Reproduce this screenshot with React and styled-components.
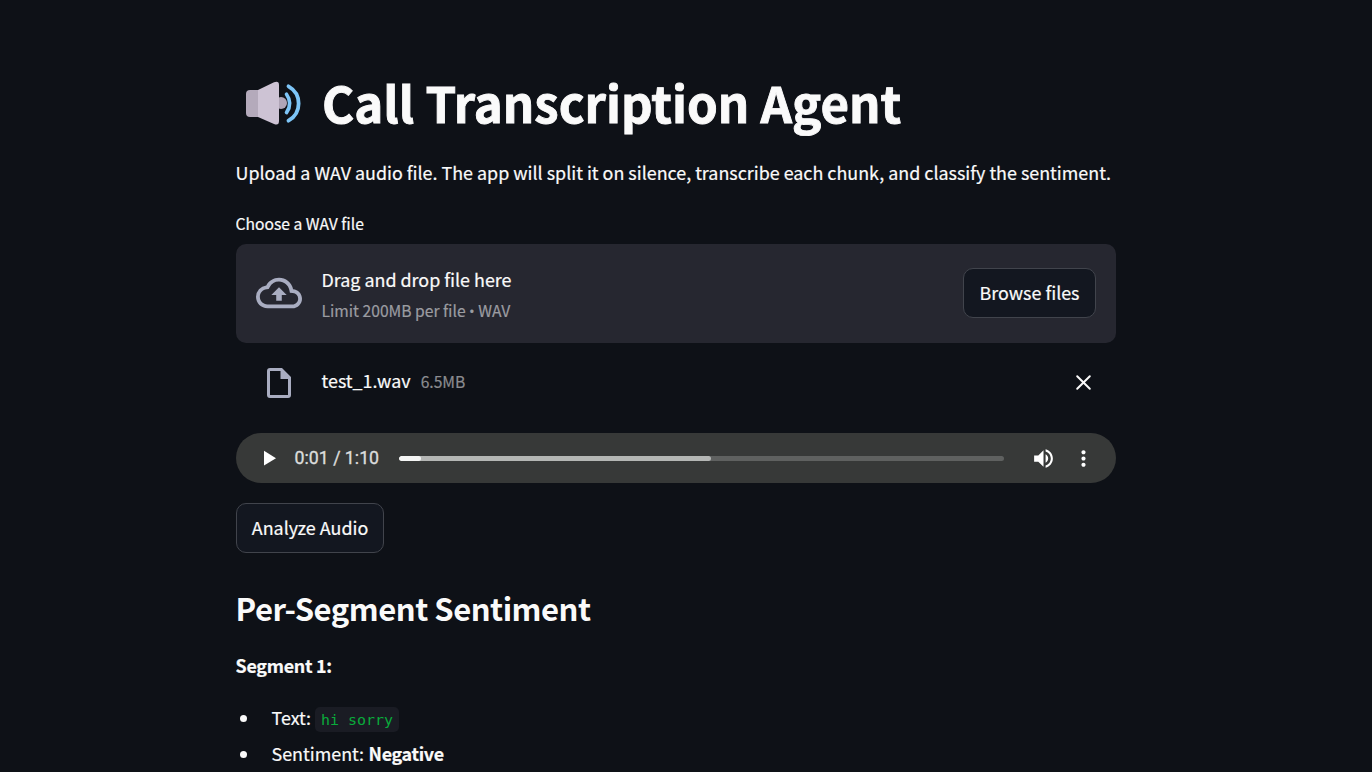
import React from "react";
import styled, { createGlobalStyle } from "styled-components";

const GlobalStyle = createGlobalStyle`
  * { box-sizing: border-box; }
  html, body { margin: 0; height: 772px; overflow: hidden; background: #0e1117; }
  body {
    color: #fafafa;
    font-family: "Noto Sans CJK SC", "Open Sans", sans-serif;
    font-size: 17.9px;
    line-height: 32px;
    -webkit-text-stroke: 0.2px;
  }
  h1, h2, p, ul { margin: 0; }
  button { font: inherit; color: inherit; cursor: pointer; }
`;

const Page = styled.main`
  width: 880px;
  height: 772px;
  margin-left: 236px;
  padding-top: 70px;
  overflow: hidden;
  white-space: nowrap;
`;

const Title = styled.h1`
  display: flex;
  align-items: center;
  height: 66px;
  font-size: 49.2px;
  font-weight: 700;
  line-height: 62px;
  -webkit-text-stroke: 0.9px;
  svg { flex: none; margin: 0 17px 0 6px; }
  span { padding-bottom: 3px; }
`;

const Intro = styled.p`
  margin: 20px 0 0 -0.5px;
`;

const Label = styled.p`
  margin: 24px 0 0 -0.5px;
  height: 32px;
  font-size: 15.66px;
  line-height: 24px;
`;

const Dropzone = styled.section`
  display: flex;
  align-items: center;
  height: 99px;
  padding: 0 20px 1px;
  border-radius: 10px;
  background: #262730;
`;

const IconSlot = styled.span`
  display: flex;
  align-items: center;
  justify-content: center;
  flex: none;
  width: 46px;
  margin-right: 19.5px;
  color: #a9adc1;
`;

const DropText = styled.div`
  flex: 1;
  display: flex;
  flex-direction: column;
  padding-top: 3px;
`;

const Hint = styled.span`
  font-size: 15.66px;
  line-height: 31px;
  color: #9b9ca1;
`;

const Dot = styled.span`
  font-family: "Open Sans", sans-serif;
  font-size: 15px;
`;

const Button = styled.button`
  width: ${(p) => p.$width}px;
  height: 50px;
  padding: 0 0 2px;
  border: 1px solid #41444c;
  border-radius: 10px;
  background: #131720;
`;

const FileRow = styled.div`
  display: flex;
  align-items: center;
  height: 50px;
  margin-top: 14px;
  padding: 0 20px;
  svg { position: relative; top: 0.5px; }
`;

const FileName = styled.span`
  margin-right: 10px;
  padding-bottom: 4px;
`;

const FileSize = styled.span`
  flex: 1;
  font-size: 15.66px;
  color: #8b8c90;
`;

const RemoveButton = styled.button`
  display: flex;
  width: 25px;
  height: 25px;
  padding: 0;
  border: 0;
  background: none;
`;

const Player = styled.div`
  display: flex;
  align-items: center;
  height: 50px;
  margin: 26px 0 20px;
  padding-left: 20px;
  border-radius: 25px;
  background: #373938;
`;

const Time = styled.span`
  width: 104.5px;
  margin-left: 12.5px;
  font-family: Roboto, sans-serif;
  font-size: 17.75px;
  color: #dcdddc;
  -webkit-text-stroke: 0.35px;
`;

const Track = styled.div`
  width: 605px;
  height: 5px;
  margin-right: 27px;
  border-radius: 3px;
  overflow: hidden;
  background: #5f6160;
`;

const Buffered = styled.div`
  width: 312px;
  height: 100%;
  border-radius: 3px;
  background: #b4b6b4;
`;

const Played = styled.div`
  width: 22px;
  height: 100%;
  border-radius: 3px;
  background: #f4f5f4;
`;

const MoreIcon = styled.svg`
  margin-left: 15px;
`;

const Heading = styled.h2`
  margin: 34px 0 0 -0.5px;
  height: 42px;
  font-size: 31px;
  font-weight: 600;
  line-height: 42px;
  letter-spacing: -0.47px;
  -webkit-text-stroke: 0;
`;

const SegmentName = styled.p`
  margin: 20px 0 0 -0.5px;
  font-weight: 600;
  letter-spacing: -0.28px;
`;

const Details = styled.ul`
  margin-top: 20px;
  padding: 0;
  list-style: none;
`;

const Detail = styled.li`
  display: flex;
  align-items: center;
  height: 32px;
  margin-bottom: 4px;
  &::before {
    content: "";
    width: 7px;
    height: 7px;
    margin: 2px 24.5px 0 4px;
    border-radius: 50%;
    background: #fafafa;
  }
`;

const Code = styled.code`
  height: 25px;
  margin: 4px 0 0 4px;
  padding: 0 6px;
  border-radius: 5px;
  background: #1a1c24;
  color: #09ab3b;
  font-family: "DejaVu Sans Mono", monospace;
  font-size: 14.95px;
  line-height: 27px;
  -webkit-text-stroke: 0;
`;

const Strong = styled.strong`
  margin-left: 4.5px;
  font-weight: 600;
  letter-spacing: -0.3px;
`;

const SpeakerIcon = () => (
  <svg width="63" height="54" viewBox="0 0 63 54">
    <circle cx="39" cy="27" r="6" fill="#b0a5b7" />
    <path d="M8 14H17V41H8Q4 41 4 37V18Q4 14 8 14Z" fill="#b4aabb" />
    <path d="M16 14 32 6.3Q37 4.5 37 9V45Q37 50 32 48L16 41Z" fill="#cdc3d4" />
    <path d="M44.5 18.2Q51 27.4 44.5 36.6" fill="none" stroke="#7dc5f7" strokeWidth="3.6" strokeLinecap="round" />
    <path d="M46.5 10.3C60 18 60 37 46.5 44.7" fill="none" stroke="#7dc5f7" strokeWidth="3.8" strokeLinecap="round" />
  </svg>
);

export default function App() {
  return (
    <>
      <GlobalStyle />
      <Page>
        <Title><SpeakerIcon /><span>Call Transcription Agent</span></Title>
        <Intro>Upload a WAV audio file. The app will split it on silence, transcribe each chunk, and classify the sentiment.</Intro>
        <Label>Choose a WAV file</Label>
        <Dropzone>
          <IconSlot>
            <svg width="46" height="46" viewBox="0 0 24 24" fill="currentColor">
              <path d="M19.35 10.04A7.49 7.49 0 0 0 12 4C9.11 4 6.6 5.64 5.35 8.04A5.994 5.994 0 0 0 0 14c0 3.31 2.69 6 6 6h13c2.76 0 5-2.24 5-5 0-2.64-2.05-4.78-4.65-4.96zM19 18H6c-2.21 0-4-1.79-4-4 0-2.05 1.53-3.76 3.56-3.97l1.07-.11.5-.95A5.469 5.469 0 0 1 12 6c2.62 0 4.88 1.86 5.39 4.43l.3 1.5 1.53.11A2.98 2.98 0 0 1 22 15c0 1.65-1.35 3-3 3zM8 13h2.55v3h2.9v-3H16l-4-4z" />
            </svg>
          </IconSlot>
          <DropText>
            <span>Drag and drop file here</span>
            <Hint>Limit 200MB per file <Dot>•</Dot> WAV</Hint>
          </DropText>
          <Button $width={133}>Browse files</Button>
        </Dropzone>
        <FileRow>
          <IconSlot>
            <svg width="24" height="30" viewBox="0 0 24 30" fill="currentColor">
              <path fillRule="evenodd" d="M3 0H15L24 9V27Q24 30 21 30H3Q0 30 0 27V3Q0 0 3 0ZM3 3V27H21V11H13.5V3Z" />
            </svg>
          </IconSlot>
          <FileName>test_1.wav</FileName>
          <FileSize>6.5MB</FileSize>
          <RemoveButton aria-label="Remove file">
            <svg width="25" height="25" viewBox="0 0 25 25" stroke="#fafafa" strokeWidth="2" strokeLinecap="round">
              <path d="M6.2 6.2 18.8 18.8M18.8 6.2 6.2 18.8" />
            </svg>
          </RemoveButton>
        </FileRow>
        <Player>
          <svg width="26" height="26" viewBox="0 0 26 26"><path d="M8 5.8 20 13.2 8 20.5Z" fill="#fff" /></svg>
          <Time>0:01 / 1:10</Time>
          <Track><Buffered><Played /></Buffered></Track>
          <svg width="25" height="25" viewBox="0 0 24 24" fill="#fff">
            <path d="M3 9v6h4l5 5V4L7 9H3zm13.5 3c0-1.77-1.02-3.29-2.5-4.03v8.05c1.48-.73 2.5-2.25 2.5-4.02zM14 3.23v2.06c2.89.86 5 3.54 5 6.71s-2.11 5.85-5 6.71v2.06c4.01-.91 7-4.49 7-8.77s-2.99-7.86-7-8.77z" />
          </svg>
          <MoreIcon width="25" height="25" viewBox="0 0 24 24" fill="#fff">
            <path d="M12 8c1.1 0 2-.9 2-2s-.9-2-2-2-2 .9-2 2 .9 2 2 2zm0 2c-1.1 0-2 .9-2 2s.9 2 2 2 2-.9 2-2-.9-2-2-2zm0 6c-1.1 0-2 .9-2 2s.9 2 2 2 2-.9 2-2-.9-2-2-2z" />
          </MoreIcon>
        </Player>
        <Button $width={148}>Analyze Audio</Button>
        <Heading>Per-Segment Sentiment</Heading>
        <SegmentName>Segment 1:</SegmentName>
        <Details>
          <Detail>Text:<Code>hi sorry</Code></Detail>
          <Detail>Sentiment:<Strong>Negative</Strong></Detail>
        </Details>
      </Page>
    </>
  );
}
